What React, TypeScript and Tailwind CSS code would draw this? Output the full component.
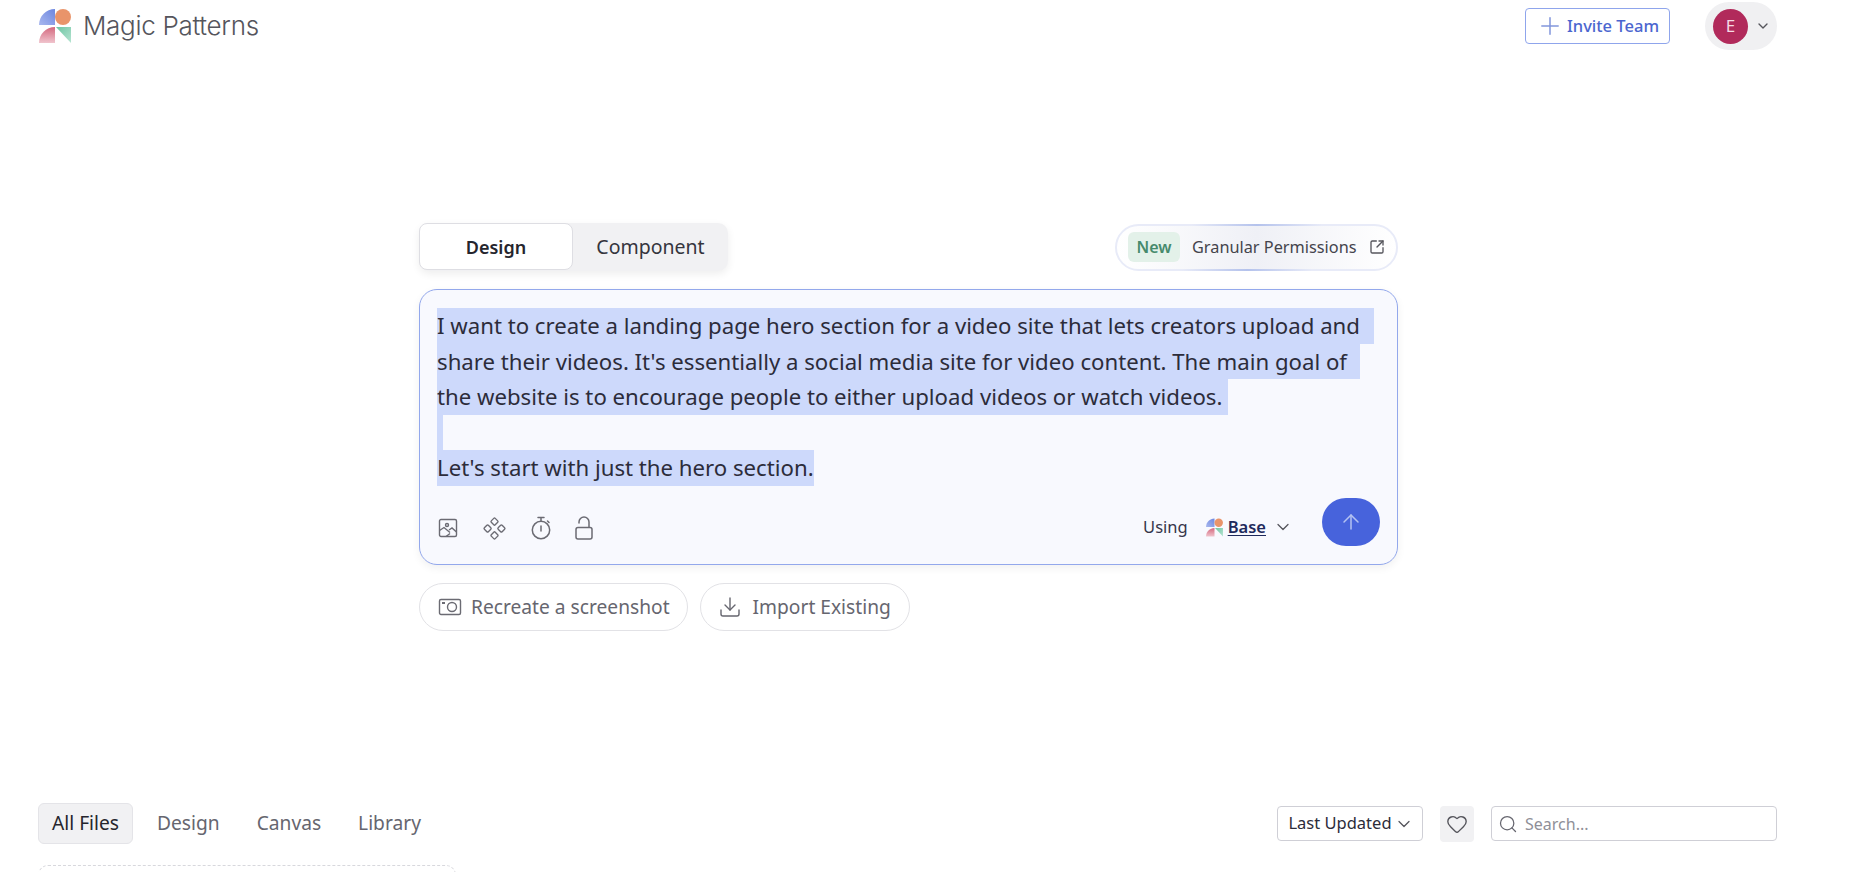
import { ArrowUp, ChevronDown, Component, Download, Heart, Plus, Search, SquareArrowOutUpRight } from "lucide-react";

const promptLines = [
  { text: "I want to create a landing page hero section for a video site that lets creators upload and ", cls: "pr-[8px]" },
  { text: "share their videos. It's essentially a social media site for video content. The main goal of ", cls: "pr-[7px]" },
  { text: "the website is to encourage people to either upload videos or watch videos. ", cls: "" },
  { text: "\u00a0", cls: "" },
  { text: "Let's start with just the hero section.", cls: "" },
];

function Logo({ size, id }: { size: number; id: string }) {
  return (
    <svg width={size} height={size} viewBox="0 0 34 36" fill="none">
      <defs>
        <linearGradient id={`${id}Blue`} x1="0" y1="1" x2="1" y2="0">
          <stop offset="0" stopColor="#a9b8ee" />
          <stop offset="1" stopColor="#6c86e0" />
        </linearGradient>
        <linearGradient id={`${id}Red`} x1="0.5" y1="0" x2="0.5" y2="1">
          <stop offset="0" stopColor="#d4687e" />
          <stop offset="1" stopColor="#f0c4cd" />
        </linearGradient>
        <linearGradient id={`${id}Green`} x1="0" y1="0" x2="1" y2="1">
          <stop offset="0" stopColor="#6cc5a2" />
          <stop offset="1" stopColor="#b7e4d2" />
        </linearGradient>
      </defs>
      <path d="M1 17C1 8 8 1 17 1V17Z" fill={`url(#${id}Blue)`} />
      <circle cx="25" cy="9" r="8" fill="#e9946a" />
      <path d="M1 35C1 26 8 19 17 19V35Z" fill={`url(#${id}Red)`} />
      <path d="M18 19H33V35Z" fill={`url(#${id}Green)`} />
    </svg>
  );
}

function ImageIcon() {
  return (
    <svg width="20" height="20" viewBox="0 0 20 20" fill="none" stroke="#6b6b73" strokeWidth="1.4">
      <rect x="1.5" y="1.5" width="17" height="17" rx="1.5" />
      <circle cx="9" cy="7" r="1.5" />
      <path d="M1.5 12.5 6 9.5l6 5M11 12l3-2 4.5 4M8 18.5l4-3" />
    </svg>
  );
}

function TimerIcon() {
  return (
    <svg width="20" height="24" viewBox="0 0 20 24" fill="none" stroke="#6b6b73" strokeWidth="1.5" strokeLinecap="round">
      <circle cx="10" cy="14" r="8.7" />
      <path d="M10 10v5M7 1.5h6M10 1.5v3.5M16.5 5l1.5 1.5" />
    </svg>
  );
}

function LockIcon() {
  return (
    <svg width="18" height="24" viewBox="0 0 18 24" fill="none" stroke="#6b6b73" strokeWidth="1.5" strokeLinecap="round">
      <rect x="1" y="11.5" width="16" height="11.5" rx="2" />
      <path d="M14 11V6a5 5 0 0 0-10 0v1" />
    </svg>
  );
}

function CameraIcon() {
  return (
    <svg width="24" height="20" viewBox="0 0 24 20" fill="none" stroke="#6b6b73" strokeWidth="1.4">
      <rect x="1.5" y="2.5" width="21" height="15" rx="1.5" />
      <circle cx="14" cy="10" r="4.5" />
      <rect x="4" y="5" width="3" height="2" fill="#6b6b73" stroke="none" />
    </svg>
  );
}

export default function App() {
  return (
    <div className="h-[872px] overflow-hidden bg-white text-[#25252d] [font-family:'Noto_Sans',sans-serif]">
      <header className="flex h-[52px] items-center justify-between pl-[37px] pr-[93px]">
        <div className="flex items-center gap-[10px]">
          <Logo size={36} id="head" />
          <span className="text-[26px] leading-none font-light tracking-[-0.3px] text-[#55555c] [font-family:Inter,sans-serif]">Magic Patterns</span>
        </div>
        <div className="flex items-center gap-[35px]">
          <button className="flex h-[36px] w-[145px] items-center justify-center gap-[3px] rounded-[4px] border border-[#8fa5ec] text-[16.5px] font-medium text-[#4b66cf]">
            <Plus className="h-[28px] w-[28px] text-[#8296dc]" strokeWidth={1.3} />
            Invite Team
          </button>
          <div className="flex h-[48px] w-[72px] items-center gap-[7px] rounded-full bg-[#f0f0f2] pl-[8px]">
            <div className="flex h-[35px] w-[35px] items-center justify-center rounded-full bg-[#b12a5b] text-[17px] text-[#f5dbe5]">E</div>
            <ChevronDown className="h-4 w-4 text-[#55555c]" />
          </div>
        </div>
      </header>

      <main className="ml-[419px] mt-[171px] w-[979px]">
        <div className="flex items-center justify-between">
          <div className="flex h-[48px] w-[309px] rounded-[10px] bg-[#f1f1f3] shadow-[0_3px_8px_rgba(0,0,0,0.07)]">
            <button className="h-[47px] w-[154px] rounded-[8px] border border-[#dedee3] bg-white pt-[1px] text-[18px] font-semibold text-[#25252d]">Design</button>
            <button className="flex-1 text-[19.5px] text-[#35353d]">Component</button>
          </div>
          <div className="relative flex h-[47px] w-[283px] items-center rounded-full border-2 border-[#e8ebf8] bg-gradient-to-r from-white via-[#eff0f6] to-white pl-[11px]">
            <span className="absolute -top-[2px] left-[75px] h-[2px] w-[130px] bg-gradient-to-r from-transparent via-[#b4c2ec] to-transparent" />
            <span className="absolute -bottom-[2px] left-[65px] h-[2px] w-[130px] bg-gradient-to-r from-transparent via-[#b4c2ec] to-transparent" />
            <span className="flex h-[30px] w-[52px] items-center justify-center rounded-[6px] bg-[#e3f1e9] text-[16px] font-semibold text-[#468a6c]">New</span>
            <span className="ml-[12px] text-[16.3px] text-[#44444c]">Granular Permissions</span>
            <SquareArrowOutUpRight className="ml-[12px] h-[16px] w-[16px] text-[#55555c]" />
          </div>
        </div>

        <div className="mt-[18px] h-[276px] rounded-[18px] border border-[#93a8ec] bg-[#f8f9fe] px-[17px] pt-[18px] shadow-[0_3px_8px_rgba(0,0,0,0.06)]">
          <div className="text-[22.2px] leading-[35.5px] text-[#2c2c3a]">
            {promptLines.map((line, i) => (
              <div key={i} className="h-[35.5px] whitespace-pre">
                <span className={`inline-block h-[35.5px] bg-[#cdd9fb] ${line.cls}`}>{line.text}</span>
              </div>
            ))}
          </div>
          <div className="mt-[12px] flex items-center justify-between">
            <div className="flex items-center gap-[24px] pl-[1px] pt-[13px] text-[#6b6b73]">
              <ImageIcon />
              <Component className="h-[25px] w-[25px]" strokeWidth={1.3} />
              <TimerIcon />
              <LockIcon />
            </div>
            <div className="flex items-center">
              <div className="flex items-center pt-[11px]">
                <span className="text-[16.5px] text-[#35354a]">Using</span>
                <span className="ml-[17px]"><Logo size={19} id="base" /></span>
                <span className="ml-[4px] text-[16.5px] font-semibold text-[#1f2a5c] underline underline-offset-2">Base</span>
                <ChevronDown className="ml-[7px] h-[20px] w-[20px] text-[#55555c]" strokeWidth={1.5} />
              </div>
              <button className="ml-[29px] flex h-[48px] w-[58px] items-center justify-center rounded-full bg-[#4763dc]">
                <ArrowUp className="h-[24px] w-[24px] text-[#b4c2f2]" strokeWidth={1.5} />
              </button>
            </div>
          </div>
        </div>

        <div className="mt-[18px] flex gap-[12px]">
          <button className="flex h-[48px] items-center gap-[9px] rounded-full border border-[#e2e2e6] pl-[18px] pr-[17px] text-[19.2px] text-[#66666f]">
            <CameraIcon />
            Recreate a screenshot
          </button>
          <button className="flex h-[48px] items-center gap-[11px] rounded-full border border-[#e2e2e6] pl-[17px] pr-[18px] text-[19.2px] text-[#66666f]">
            <Download className="h-[24px] w-[24px]" strokeWidth={1.4} />
            Import Existing
          </button>
        </div>
      </main>

      <section className="mt-[172px] flex items-center justify-between pl-[38px] pr-[93px]">
        <div className="flex items-center gap-[24px] text-[19.2px] text-[#66666f]">
          <span className="flex h-[41px] w-[95px] items-center justify-center rounded-[6px] border border-[#e4e4e8] bg-[#f1f1f3] text-[#25252d]">All Files</span>
          <span>Design</span>
          <span className="ml-[13px]">Canvas</span>
          <span className="ml-[13px]">Library</span>
        </div>
        <div className="flex items-center">
          <button className="flex h-[35px] w-[146px] items-center justify-center gap-[2px] rounded-[4px] border border-[#cfcfd6] pl-[2px] text-[16.5px] text-[#2c2c3a]">
            Last Updated
            <ChevronDown className="h-[20px] w-[20px] text-[#55555c]" strokeWidth={1.5} />
          </button>
          <span className="ml-[17px] flex h-[36px] w-[34px] items-center justify-center rounded-[4px] bg-[#f1f1f3]">
            <Heart className="h-[22px] w-[22px] text-[#55555c]" strokeWidth={1.5} />
          </span>
          <div className="ml-[17px] flex h-[35px] w-[286px] items-center gap-[7px] rounded-[4px] border border-[#cfcfd6] pl-[6px]">
            <Search className="h-[20px] w-[20px] text-[#66666f]" strokeWidth={1.5} />
            <span className="text-[16px] text-[#8f8f98]">Search...</span>
          </div>
        </div>
      </section>

      <div className="ml-[38px] mt-[21px] h-[40px] w-[418px] rounded-[10px] border border-dashed border-[#d8d8dd]" />
    </div>
  );
}
